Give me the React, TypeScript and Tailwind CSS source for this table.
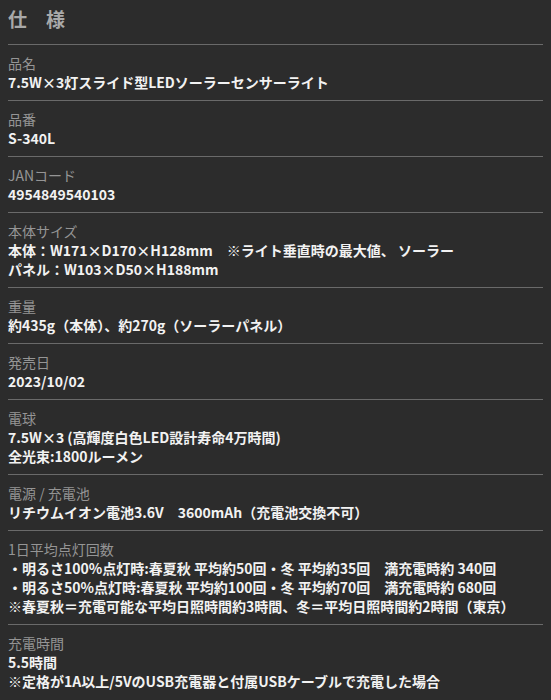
const specs: { label: string; lines: string[] }[] = [
  { label: "品名", lines: ["7.5W×3灯スライド型LEDソーラーセンサーライト"] },
  { label: "品番", lines: ["S-340L"] },
  { label: "JANコード", lines: ["4954849540103"] },
  {
    label: "本体サイズ",
    lines: ["本体：W171×D170×H128mm　※ライト垂直時の最大値、 ソーラー", "パネル：W103×D50×H188mm"],
  },
  { label: "重量", lines: ["約435g（本体）、約270g（ソーラーパネル）"] },
  { label: "発売日", lines: ["2023/10/02"] },
  { label: "電球", lines: ["7.5W×3 (高輝度白色LED設計寿命4万時間)", "全光束:1800ルーメン"] },
  { label: "電源 / 充電池", lines: ["リチウムイオン電池3.6V　3600mAh（充電池交換不可）"] },
  {
    label: "1日平均点灯回数",
    lines: [
      "・明るさ100%点灯時:春夏秋 平均約50回・冬 平均約35回　満充電時約 340回",
      "・明るさ50%点灯時:春夏秋 平均約100回・冬 平均約70回　満充電時約 680回",
      "※春夏秋＝充電可能な平均日照時間約3時間、冬＝平均日照時間約2時間（東京）",
    ],
  },
  { label: "充電時間", lines: ["5.5時間", "※定格が1A以上/5VのUSB充電器と付属USBケーブルで充電した場合"] },
]

export default function App() {
  return (
    <div
      className="min-h-[700px] w-[551px] bg-[#2c2c2c] px-2"
      style={{ fontFamily: '"Noto Sans CJK JP", "Noto Sans", sans-serif' }}
    >
      {/* heading */}
      <div className="h-[44px] pt-[5px] text-[19px] leading-[28px] font-bold text-[#a9a9a9]">仕　様</div>

      {specs.map((s) => (
        <div key={s.label} className="border-t border-[#6a6a6a] pt-[9px] pb-[8px] text-[14px] leading-[19px]">
          <div className="text-[#959595]">{s.label}</div>
          {s.lines.map((l, i) => (
            <div key={i} className="font-bold text-[#f2f2f2] whitespace-nowrap">
              {l}
            </div>
          ))}
        </div>
      ))}
    </div>
  )
}
